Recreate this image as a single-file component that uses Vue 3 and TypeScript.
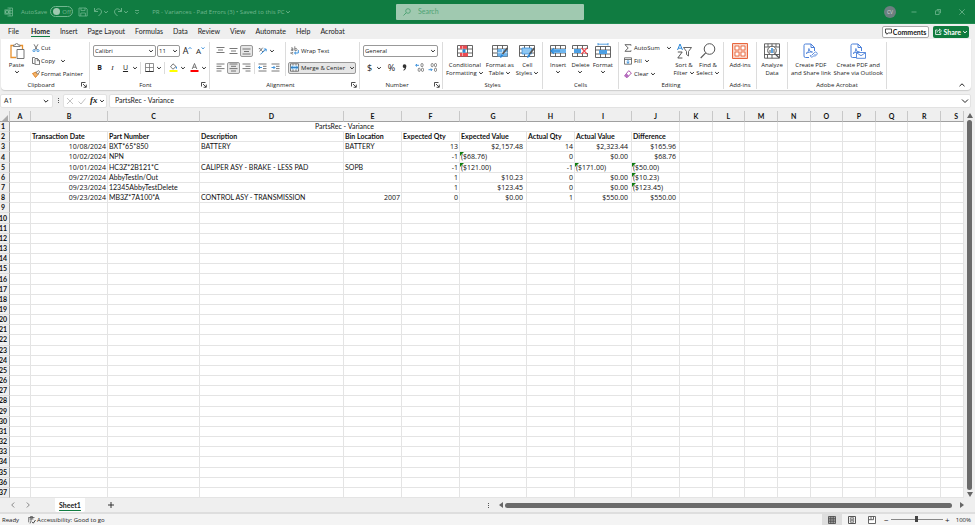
<script setup lang="ts">
import { ref } from 'vue'

interface Cell {
  text: string
  kind?: 'num' | 'money' | 'flag'
}

const tabs: string[] = ['File', 'Home', 'Insert', 'Page Layout', 'Formulas', 'Data', 'Review', 'View', 'Automate', 'Help', 'Acrobat']
const activeTab = ref('Home')

const columns: string[] = 'ABCDEFGHIJKLMNOPQRS'.split('')
const headings: string[] = ['', 'Transaction Date', 'Part Number', 'Description', 'Bin Location', 'Expected Qty', 'Expected Value', 'Actual Qty', 'Actual Value', 'Difference']

const t = (text: string): Cell => ({ text })
const n = (text: string): Cell => ({ text, kind: 'num' })
const m = (text: string): Cell => ({ text, kind: 'money' })
const f = (text: string): Cell => ({ text, kind: 'flag' })

const records: Cell[][] = [
  [t(''), n('10/08/2024'), t('BXT*65*850'), t('BATTERY'), t('BATTERY'), n('13'), m('$2,157.48'), n('14'), m('$2,323.44'), m('$165.96')],
  [t(''), n('10/02/2024'), t('NPN'), t(''), t(''), n('-1'), f('($68.76)'), n('0'), m('$0.00'), m('$68.76')],
  [t(''), n('10/01/2024'), t('HC3Z*2B121*C'), t('CALIPER ASY - BRAKE - LESS PAD'), t('SOPB'), n('-1'), f('($121.00)'), n('-1'), f('($171.00)'), f('($50.00)')],
  [t(''), n('09/27/2024'), t('AbbyTestIn/Out'), t(''), t(''), n('1'), m('$10.23'), n('0'), m('$0.00'), f('($10.23)')],
  [t(''), n('09/23/2024'), t('12345AbbyTestDelete'), t(''), t(''), n('1'), m('$123.45'), n('0'), m('$0.00'), f('($123.45)')],
  [t(''), n('09/23/2024'), t('MB3Z*7A100*A'), t('CONTROL ASY - TRANSMISSION'), n('2007'), n('0'), m('$0.00'), n('1'), m('$550.00'), m('$550.00')],
]
const emptyRows: number[] = Array.from({ length: 29 }, (_, i) => i + 9)

const fontName = ref('Calibri')
const fontSize = ref('11')
const numberFormat = ref('General')
const formula = ref('PartsRec - Variance')
const query = ref('')
const zoom = ref(50)
</script>

<template>
  <svg class="defs" aria-hidden="true">
    <symbol id="chev" viewBox="0 0 6 6"><path d="M1.2 2.1 3 3.9 4.8 2.1" fill="none" stroke="currentColor" stroke-width="1" /></symbol>
    <symbol id="launch" viewBox="0 0 6 6"><path d="M.5 4.500V.5h4M2 2l3 3M5.300 2.600v2.700H2.600" fill="none" stroke="currentColor" stroke-width=".8" /></symbol>
    <symbol id="grid" viewBox="0 0 16 14">
      <path d="M.5 1.500h15v11H.5zM.5 5h15M.5 9h15M5.500 1.500v11M10.500 1.500v11" fill="#fff" stroke="#555" stroke-width=".9" />
    </symbol>
    <symbol id="pdf" viewBox="0 0 14 16">
      <path d="M6 14.500H2.500A1.500 1.500 0 0 1 1 13V2.500A1.500 1.500 0 0 1 2.500 1H8l3.500 3.500V8M8 1v3.500h3.500" fill="none" stroke="#4a7fd8" stroke-width="1" />
      <path d="M3 10.500C5 9.500 6 7.500 5.900 5.500 6.200 8 7.500 9 9.500 9 7 8.800 5 9.300 3 10.500z" fill="none" stroke="#4a7fd8" stroke-width=".9" />
    </symbol>
  </svg>

  <div class="app">
    <header class="title-bar">
      <div class="quick">
        <svg class="i10 logo" viewBox="0 0 10 10"><path d="M3.500 1h5v8h-5M6 1v8M3.500 3.700h5M3.500 6.300h5" fill="none" stroke="currentColor" stroke-width=".8" /><path d="M.5 2.500h5v5h-5z" fill="currentColor" /><path d="m1.800 3.500 2.400 3m0-3-2.400 3" stroke="#107c41" stroke-width=".8" /></svg>
        <span class="autosave">AutoSave</span>
        <button class="toggle" aria-label="AutoSave"><i></i>Off</button>
        <button class="tb save" aria-label="Save"><svg class="i10" viewBox="0 0 10 10"><path d="M1 1h7l1.200 1.200V9H1zM3 1v2.600h4V1M2.800 9V6h4.600v3" fill="none" stroke="currentColor" stroke-width=".8" /></svg></button>
        <button class="tb" aria-label="Undo"><svg class="i10" viewBox="0 0 10 10"><path d="M1.500 1v3.500H5M1.700 4.300C4 1.500 6 1.400 7.500 2.600 9 4 8.600 5.800 7.500 7L5.500 9" fill="none" stroke="currentColor" stroke-width=".9" /></svg></button>
        <svg class="chev"><use href="#chev" /></svg>
        <button class="tb redo" aria-label="Redo"><svg class="i10" viewBox="0 0 10 10"><path d="M8.500 1v3.500H5M8.300 4.300C6 1.500 4 1.400 2.500 2.600 1 4 1.400 5.800 2.500 7l2 2" fill="none" stroke="currentColor" stroke-width=".9" /></svg></button>
        <svg class="chev"><use href="#chev" /></svg>
        <svg class="chev custom" viewBox="0 0 6 6"><path d="M1 1.500h4M1.300 3.200 3 4.900l1.700-1.700" fill="none" stroke="currentColor" stroke-width=".8" /></svg>
        <span class="doc">PR - Variances - Pad Errors (3) • Saved to this PC</span>
        <svg class="chev"><use href="#chev" /></svg>
      </div>
      <label class="search">
        <svg class="i8" viewBox="0 0 8 8"><circle cx="5" cy="3" r="2.300" fill="none" stroke="currentColor" stroke-width=".9" /><path d="M3.300 4.700.5 7.500" stroke="currentColor" /></svg>
        <input v-model="query" type="search" placeholder="Search" aria-label="Search" />
      </label>
      <div class="window">
        <button class="avatar" aria-label="Account">CV</button>
        <button class="tb" aria-label="Minimize"><svg class="i8" viewBox="0 0 8 8"><path d="M1.500 4h5" stroke="currentColor" stroke-width=".8" /></svg></button>
        <button class="tb" aria-label="Restore"><svg class="i8" viewBox="0 0 8 8"><path d="M1.500 2.800h3.700v3.700H1.500zM2.800 1.500h3.700v3.700" fill="none" stroke="currentColor" stroke-width=".8" /></svg></button>
        <button class="tb" aria-label="Close"><svg class="i8" viewBox="0 0 8 8"><path d="m1.300 1.300 5.400 5.400m0-5.400L1.300 6.700" stroke="currentColor" stroke-width=".8" /></svg></button>
      </div>
    </header>

    <nav class="tabs">
      <button v-for="tab in tabs" :key="tab" class="tab" :class="{ active: tab === activeTab }" @click="activeTab = tab">{{ tab }}</button>
      <span class="grow"></span>
      <button class="comments"><svg class="i7" viewBox="0 0 7 7"><path d="M.5 1h6v4H3.200L1.800 6.300V5H.5z" fill="none" stroke="currentColor" stroke-width=".8" /></svg>Comments</button>
      <button class="share"><svg class="i7" viewBox="0 0 7 7"><path d="M2.500 2H.6v4.500h5.200V4.800M2 4.500C2.200 3 3.200 2.400 4.500 2.400V1l2 1.900-2 1.900V3.500" fill="none" stroke="currentColor" stroke-width=".8" /></svg>Share<svg class="chev"><use href="#chev" /></svg></button>
    </nav>

    <section class="ribbon">
      <div class="group clipboard">
        <div class="body">
          <button class="big">
            <svg class="pic" viewBox="0 0 16 16"><path d="M4.500 2.500H2v12h5M11 2.500h2.500V6" fill="none" stroke="#e8912d" stroke-width="1.300" /><path d="M4.500 3.500V2h1.700a1.500 1.500 0 0 1 3 0H11v1.500z" fill="#fff" stroke="#666" stroke-width=".8" /><path d="M8 6.500h7v9H8z" fill="#fff" stroke="#666" stroke-width=".9" /></svg>
            <span>Paste</span><svg class="chev"><use href="#chev" /></svg>
          </button>
          <div class="stack">
            <button><svg class="i8" viewBox="0 0 8 8"><path d="M2 .3 5.300 6M6 .3 2.700 6" stroke="#555" stroke-width=".8" /><circle cx="2" cy="6.700" r="1.100" fill="none" stroke="#2b88d8" stroke-width=".8" /><circle cx="6" cy="6.700" r="1.100" fill="none" stroke="#2b88d8" stroke-width=".8" /></svg>Cut</button>
            <button><svg class="i8" viewBox="0 0 8 8"><path d="M2.500 6.500H.5v-6h2.300M3 1.500h2.500l2 2v4.200H3zM5.300 1.500v2.200h2.200" fill="none" stroke="#555" stroke-width=".8" /></svg>Copy<svg class="chev gap"><use href="#chev" /></svg></button>
            <button><svg class="i8" viewBox="0 0 8 8"><path d="M.5 3.500 4 2l2 2.500-2.500 3z" fill="#f2b36b" stroke="#d9730d" stroke-width=".8" /><path d="M4 2.300 6 4.400 7.600 1.700 6.700.6z" fill="#fff" stroke="#555" stroke-width=".7" /></svg>Format Painter</button>
          </div>
        </div>
        <div class="name"><span>Clipboard</span><svg class="launch"><use href="#launch" /></svg></div>
      </div>

      <div class="group font">
        <div class="body lines">
          <div class="line">
            <span class="combo wide"><select v-model="fontName" aria-label="Font"><option>Calibri</option></select><svg class="chev"><use href="#chev" /></svg></span>
            <span class="combo size"><select v-model="fontSize" aria-label="Font size"><option>11</option></select><svg class="chev"><use href="#chev" /></svg></span>
            <button class="ib grow-font" aria-label="Increase font size">A<svg class="tick" viewBox="0 0 4 4"><path d="m.5 3 1.500-1.700L3.500 3" fill="none" stroke="#2b88d8" stroke-width=".8" /></svg></button>
            <button class="ib shrink-font" aria-label="Decrease font size">A<svg class="tick" viewBox="0 0 4 4"><path d="M.5 1.300 2 3l1.500-1.700" fill="none" stroke="#2b88d8" stroke-width=".8" /></svg></button>
          </div>
          <div class="line">
            <button class="ib"><b>B</b></button><button class="ib"><em>I</em></button><button class="ib"><u>U</u></button><svg class="chev"><use href="#chev" /></svg>
            <i class="bar"></i>
            <button class="ib" aria-label="Borders"><svg class="i9" viewBox="0 0 9 9"><path d="M.5.5h8v8h-8zM4.500.5v8M.5 4.500h8" fill="none" stroke="#777" stroke-width=".8" /><path d="M.5 8.500h8" stroke="#333" /></svg></button><svg class="chev"><use href="#chev" /></svg>
            <i class="bar"></i>
            <button class="ib" aria-label="Fill color"><svg class="i9" viewBox="0 0 9 9"><path d="m4 .8 3 2.700-3 2.700-2.500-2.400z" fill="#fff" stroke="#555" stroke-width=".8" /><path d="M7.200 3q1.300 1.800.6 2.700-.8.300-1-.7z" fill="#2b88d8" /><path d="M.5 7h8v2h-8z" fill="#ff0" /></svg></button><svg class="chev"><use href="#chev" /></svg>
            <button class="ib font-color" aria-label="Font color"><svg class="i9" viewBox="0 0 9 9"><path d="M2.200 6 4.500.5 6.800 6M3 4.200h3" fill="none" stroke="#555" stroke-width=".8" /><path d="M.5 7h8v2h-8z" fill="red" /></svg></button><svg class="chev"><use href="#chev" /></svg>
          </div>
        </div>
        <div class="name"><span>Font</span><svg class="launch"><use href="#launch" /></svg></div>
      </div>

      <div class="group alignment">
        <div class="body split">
          <div class="lines">
            <div class="line">
              <button class="ib" aria-label="Top align"><svg class="i9" viewBox="0 0 9 9"><path d="M.5 1.500h8M2 4h5M.5 6.500h8" stroke="#555" stroke-width=".8" /></svg></button>
              <button class="ib" aria-label="Middle align"><svg class="i9" viewBox="0 0 9 9"><path d="M.5 2.500h8M2 5h5M.5 7.500h8" stroke="#555" stroke-width=".8" /></svg></button>
              <button class="ib on" aria-label="Bottom align"><svg class="i9" viewBox="0 0 9 9"><path d="M.5 3h8M2 5.500h5M.5 8h8" stroke="#555" stroke-width=".8" /></svg></button>
              <button class="ib orient" aria-label="Orientation"><svg class="i9" viewBox="0 0 9 9"><path d="M.8 2.800q1.500-1 2 .5l.8 1.400M1.500 5.500l3.200-3.800M4 5.500q1.800.5 1.800-1" fill="none" stroke="#555" stroke-width=".8" /><path d="M2.500 8.300 8 3.300M5.800 3H8.200v2.300" fill="none" stroke="#2b88d8" stroke-width=".9" /></svg></button><svg class="chev"><use href="#chev" /></svg>
            </div>
            <div class="line">
              <button class="ib" aria-label="Align left"><svg class="i9" viewBox="0 0 9 9"><path d="M.5 1h8M.5 3.300h5M.5 5.600h8M.5 8h5" stroke="#555" stroke-width=".8" /></svg></button>
              <button class="ib on" aria-label="Center"><svg class="i9" viewBox="0 0 9 9"><path d="M.5 1h8M2 3.300h5M.5 5.600h8M2 8h5" stroke="#555" stroke-width=".8" /></svg></button>
              <button class="ib" aria-label="Align right"><svg class="i9" viewBox="0 0 9 9"><path d="M.5 1h8M3.500 3.300h5M.5 5.600h8M3.500 8h5" stroke="#555" stroke-width=".8" /></svg></button>
              <i class="bar"></i>
              <button class="ib" aria-label="Decrease indent"><svg class="i9" viewBox="0 0 9 9"><path d="M.5 1h8M5 3.300h3.500M5 5.600h3.500M.5 8h8" stroke="#555" stroke-width=".8" /><path d="M4 4.500H.7M2 3 .6 4.500 2 6" fill="none" stroke="#2b88d8" stroke-width=".9" /></svg></button>
              <button class="ib" aria-label="Increase indent"><svg class="i9" viewBox="0 0 9 9"><path d="M.5 1h8M5 3.300h3.500M5 5.600h3.500M.5 8h8" stroke="#555" stroke-width=".8" /><path d="M.5 4.500h3.300M2.500 3l1.400 1.500L2.500 6" fill="none" stroke="#2b88d8" stroke-width=".9" /></svg></button>
            </div>
          </div>
          <div class="lines wrap-col">
            <div class="line"><button class="wrap"><svg class="i9" viewBox="0 0 9 9"><path d="M1 2q2-.8 2 1v1.500M3 3.200q-2 0-2 .9 0 .9 2 .2M4.800.3v4.200M4.800 2.800q2.200-1 2.200.7T4.800 4.300M1 6.200v1.600M3.200 6.300q-1.700 0-1.700.9t1.700.9" fill="none" stroke="#555" stroke-width=".7" /><path d="M8.300 4v3H4.500M6 5.600 4.500 7 6 8.400" fill="none" stroke="#2b88d8" stroke-width=".9" /></svg>Wrap Text</button></div>
            <div class="line"><button class="merge"><svg class="i9" viewBox="0 0 9 9"><path d="M.5.8h8v7.400h-8z" fill="#fff" stroke="#555" stroke-width=".8" /><path d="M.8 2.700h7.400v3.600H.8z" fill="#9fd0f5" /><path d="M3 .8v1.700M6 .8v1.700M3 6.300v2M6 6.300v2" stroke="#555" stroke-width=".7" /><path d="M1.300 4.500h6.400M2.500 3.400 1.300 4.500l1.200 1.100M6.500 3.400l1.200 1.100-1.200 1.100" fill="none" stroke="#1b6fb8" stroke-width=".8" /></svg><span>Merge &amp; Center</span><svg class="chev"><use href="#chev" /></svg></button></div>
          </div>
        </div>
        <div class="name"><span>Alignment</span><svg class="launch"><use href="#launch" /></svg></div>
      </div>

      <div class="group number">
        <div class="body lines">
          <div class="line"><span class="combo full"><select v-model="numberFormat" aria-label="Number format"><option>General</option></select><svg class="chev"><use href="#chev" /></svg></span></div>
          <div class="line">
            <button class="ib sym">$</button><svg class="chev"><use href="#chev" /></svg>
            <button class="ib sym pct">%</button><button class="ib" aria-label="Comma style"><svg class="i7" viewBox="0 0 7 7"><path d="M3.500.3a1.900 1.900 0 0 1 1.900 2q0 3-2.600 4.400l-.5-.7Q3.700 5 3.700 4.100 1.700 4 1.700 2.200A1.800 1.800 0 0 1 3.500.3z" fill="#333" /></svg></button>
            <button class="ib dec" aria-label="Increase decimal"><svg class="i9" viewBox="0 0 9 9"><path d="M4 2.300H.7M2 1 .7 2.300 2 3.600" fill="none" stroke="#2b88d8" stroke-width=".9" /><rect x="6" y=".5" width="2" height="3.200" rx="1" fill="none" stroke="#555" stroke-width=".7" /><rect x="3.200" y="5.200" width="2" height="3.200" rx="1" fill="none" stroke="#555" stroke-width=".7" /><rect x="6.500" y="5.200" width="2" height="3.200" rx="1" fill="none" stroke="#555" stroke-width=".7" /></svg></button>
            <button class="ib" aria-label="Decrease decimal"><svg class="i9" viewBox="0 0 9 9"><path d="M.5 6.700h3.600M2.800 5.400l1.300 1.300L2.800 8" fill="none" stroke="#2b88d8" stroke-width=".9" /><rect x="3.200" y=".5" width="2" height="3.200" rx="1" fill="none" stroke="#555" stroke-width=".7" /><rect x="6.500" y=".5" width="2" height="3.200" rx="1" fill="none" stroke="#555" stroke-width=".7" /><rect x="6.500" y="5.200" width="2" height="3.200" rx="1" fill="none" stroke="#555" stroke-width=".7" /></svg></button>
          </div>
        </div>
        <div class="name"><span>Number</span><svg class="launch"><use href="#launch" /></svg></div>
      </div>

      <div class="group styles">
        <div class="body">
          <button class="big"><svg class="pic" viewBox="0 0 16 16"><use href="#grid" y="1" height="14" /><path d="M3 2.500h7v3.300H3zM3 10h8v3.500H3z" fill="#ee4b52" /><path d="M5.500 6.200h3v3.500h-3z" fill="#2b88d8" /><path d="M5.500 3v10" stroke="#fff" stroke-width=".5" /></svg><span>Conditional<br />Formatting<svg class="chev"><use href="#chev" /></svg></span></button>
          <button class="big"><svg class="pic" viewBox="0 0 16 16"><use href="#grid" y="1" height="14" /><path d="M5.500 6h10v7.500h-10z" fill="#6db5ee" /><path d="M5.500 9.700h10M10.500 6v7.500" stroke="#fff" stroke-width=".6" /><path d="m15.500 5-5 6" stroke="#555" stroke-width="1.800" /><path d="M8 15q.3-3 2-4l1.300 1.200Q10.500 15 8 15z" fill="#2b88d8" /></svg><span>Format as<br />Table<svg class="chev"><use href="#chev" /></svg></span></button>
          <button class="big"><svg class="pic" viewBox="0 0 16 16"><use href="#grid" y="1" height="14" /><path d="M3 5h9.500v6H3z" fill="#8fc7f2" stroke="#2b88d8" stroke-width=".7" /><path d="m15.500 5-5 6" stroke="#555" stroke-width="1.800" /><path d="M8 15q.3-3 2-4l1.300 1.200Q10.500 15 8 15z" fill="#2b88d8" /></svg><span>Cell<br />Styles<svg class="chev"><use href="#chev" /></svg></span></button>
        </div>
        <div class="name"><span>Styles</span></div>
      </div>

      <div class="group cells">
        <div class="body">
          <button class="big"><svg class="pic" viewBox="0 0 16 16"><use href="#grid" y="1" height="14" /><path d="M3 6h13v4H3z" fill="#6db5ee" /><path d="M10 8H1M4 5.200 1 8l3 2.800" fill="none" stroke="#2b88d8" stroke-width="1.200" /></svg><span>Insert</span><svg class="chev"><use href="#chev" /></svg></button>
          <button class="big"><svg class="pic" viewBox="0 0 16 16"><use href="#grid" y="1" height="14" /><path d="M0 6h16v4H0z" fill="#fff" /><path d="M2 6h7v4H2z" fill="#4c9fe3" /><path d="m9.500 5 5.500 6m0-6-5.500 6" stroke="#ee4b52" stroke-width="1.200" /></svg><span>Delete</span><svg class="chev"><use href="#chev" /></svg></button>
          <button class="big"><svg class="pic" viewBox="0 0 16 16"><use href="#grid" y="2" height="14" /><path d="M4 7h8v4H4z" fill="#4c9fe3" /><path d="M3 1.200h10M3 0v2.400M13 0v2.400" stroke="#2b88d8" stroke-width=".8" /></svg><span>Format</span><svg class="chev"><use href="#chev" /></svg></button>
        </div>
        <div class="name"><span>Cells</span></div>
      </div>

      <div class="group editing">
        <div class="body">
          <div class="stack">
            <button class="sum"><svg class="i8" viewBox="0 0 8 8"><path d="M7 1.600V.7H1L4.200 4 1 7.300h6v-.9" fill="none" stroke="#555" stroke-width=".9" /></svg><span>AutoSum</span><svg class="chev gap"><use href="#chev" /></svg></button>
            <button><svg class="i8" viewBox="0 0 8 8"><path d="M.5.8h7v6.400h-7zM.5 2.500h7" fill="none" stroke="#555" stroke-width=".8" /><path d="M4 3v3.300M2.600 5 4 6.300 5.400 5" fill="none" stroke="#2b88d8" stroke-width=".9" /></svg>Fill<svg class="chev"><use href="#chev" /></svg></button>
            <button><svg class="i8" viewBox="0 0 8 8"><path d="M4.700.7 7.400 3 3.500 7.300H2L.6 5.800z" fill="#fff" stroke="#a349a4" stroke-width=".9" /><path d="M2.500 3.500 5 5.700 3.500 7.300H2L.6 5.800z" fill="#b56cc0" /></svg>Clear<svg class="chev"><use href="#chev" /></svg></button>
          </div>
          <button class="big"><svg class="pic" viewBox="0 0 16 16"><path d="M1.500 7 4 1l2.500 6M2.300 5.200h3.400" fill="none" stroke="#2b88d8" /><path d="M1.800 9h4.400l-4.400 6h4.600" fill="none" stroke="#555" /><path d="M7.500 4.500h8l-3 4v4.500l-2-1.500v-3z" fill="none" stroke="#555" stroke-width=".9" /></svg><span>Sort &amp;<br />Filter<svg class="chev"><use href="#chev" /></svg></span></button>
          <button class="big"><svg class="pic" viewBox="0 0 16 16"><circle cx="9.500" cy="6" r="5.300" fill="none" stroke="#555" /><path d="M5.700 9.800.7 15" stroke="#555" stroke-width="1.100" /></svg><span>Find &amp;<br />Select<svg class="chev"><use href="#chev" /></svg></span></button>
        </div>
        <div class="name"><span>Editing</span></div>
      </div>

      <div class="group addins">
        <div class="body"><button class="big"><svg class="pic" viewBox="0 0 16 16"><path d="M.5.5h15v15H.5z" fill="#f9d3c6" stroke="#e8663d" /><path d="M3 3h4v4H3zM9 3h4v4H9zM3 9h4v4H3zM9 9h4v4H9z" fill="#fff" stroke="#e8663d" stroke-width=".9" /></svg><span>Add-ins</span></button></div>
        <div class="name"><span>Add-ins</span></div>
      </div>

      <div class="group analyze">
        <div class="body"><button class="big"><svg class="pic" viewBox="0 0 16 16"><path d="M.5.8h15v14.400H.5zM.5 4h15M.5 11.500h15M4 .8V4M8 .8V4M12 .8V4M3.500 11.500v3.700M8 11.500v3.700" fill="none" stroke="#555" stroke-width=".9" /><circle cx="8" cy="7.500" r="4.300" fill="#fff" stroke="#555" /><path d="M6 7v3M10 6v4" stroke="#555" /><path d="M8 5v5" stroke="#2b88d8" stroke-width="1.500" /><path d="m11 10.700 4 4" stroke="#555" stroke-width="1.300" /></svg><span>Analyze<br />Data</span></button></div>
        <div class="name"></div>
      </div>

      <div class="group acrobat">
        <div class="body">
          <button class="big"><svg class="pic" viewBox="0 0 16 16"><use href="#pdf" width="14" height="16" /><path d="m8.500 12.500 3-3a1.500 1.500 0 0 1 2.200 2.200l-2 2M12.500 11l-3 3a1.500 1.500 0 0 1-2-2" fill="none" stroke="#4a7fd8" stroke-width=".9" /></svg><span>Create PDF<br />and Share link</span></button>
          <button class="big"><svg class="pic" viewBox="0 0 16 16"><use href="#pdf" width="14" height="16" /><path d="M6.500 9.500h9v5.800h-9zM6.500 9.700l4.500 3 4.500-3" fill="#fff" stroke="#4a7fd8" stroke-width=".9" /></svg><span>Create PDF and<br />Share via Outlook</span></button>
        </div>
        <div class="name"><span>Adobe Acrobat</span></div>
      </div>
      <button class="collapse" aria-label="Collapse ribbon"><svg class="i8" viewBox="0 0 8 8"><path d="m1.500 5.200 2.500-2.400 2.500 2.400" fill="none" stroke="currentColor" /></svg></button>
    </section>

    <section class="formula-bar">
      <button class="box name-box">A1<svg class="i8" viewBox="0 0 8 8"><path d="M1.800 3 4 5.200 6.200 3" fill="none" stroke="currentColor" /></svg></button>
      <span class="dots"><i></i><i></i><i></i></span>
      <div class="box fx-box">
        <button aria-label="Cancel"><svg class="i8" viewBox="0 0 8 8"><path d="m1 1 6 6m0-6L1 7" stroke="#bbb" stroke-width=".9" /></svg></button>
        <button aria-label="Enter"><svg class="i8" viewBox="0 0 8 8"><path d="M.5 4.500 3 7l4.500-5.500" fill="none" stroke="#bbb" stroke-width=".9" /></svg></button>
        <button class="fx">fx</button>
        <svg class="chev"><use href="#chev" /></svg>
      </div>
      <label class="box entry"><input v-model="formula" aria-label="Formula" /><svg class="i8" viewBox="0 0 8 8"><path d="M1 2.500 4 5.500l3-3" fill="none" stroke="currentColor" /></svg></label>
    </section>

    <main class="sheet">
      <table>
        <thead>
          <tr><th class="corner"><i></i></th><th v-for="c in columns" :key="c" :class="{ cut: c === 'S' }">{{ c }}</th></tr>
        </thead>
        <tbody>
          <tr><th>1</th><td colspan="10" class="merged">PartsRec - Variance</td><td v-for="k in 9" :key="k"></td></tr>
          <tr><th>2</th><td v-for="(h, i) in headings" :key="i" class="head">{{ h }}</td><td v-for="k in 9" :key="'b' + k"></td></tr>
          <tr v-for="(row, r) in records" :key="r"><th>{{ r + 3 }}</th><td v-for="(cell, i) in row" :key="i" :class="cell.kind">{{ cell.text }}</td><td v-for="k in 9" :key="'b' + k"></td></tr>
          <tr v-for="r in emptyRows" :key="r"><th>{{ r }}</th><td v-for="k in 19" :key="k"></td></tr>
        </tbody>
      </table>
      <div class="vscroll"><i class="arrow up"></i><i class="thumb"></i><i class="arrow down"></i></div>
    </main>

    <div class="sheet-bar">
      <button class="nav" aria-label="Previous sheet"><svg class="i8" viewBox="0 0 8 8"><path d="M5.200 1.500 2.700 4l2.500 2.500" fill="none" stroke="currentColor" /></svg></button>
      <button class="nav" aria-label="Next sheet"><svg class="i8" viewBox="0 0 8 8"><path d="M2.800 1.500 5.300 4 2.800 6.500" fill="none" stroke="currentColor" /></svg></button>
      <button class="sheet-tab"><span>Sheet1</span></button>
      <button class="add" aria-label="New sheet"><svg class="i8" viewBox="0 0 8 8"><path d="M4 1v6M1 4h6" stroke="currentColor" stroke-width=".9" /></svg></button>
      <div class="hscroll"><span class="dots"><i></i><i></i><i></i></span><i class="arrow left"></i><i class="thumb"></i><i class="arrow right"></i></div>
    </div>

    <footer class="status">
      <span class="ready">Ready</span>
      <svg class="i8" viewBox="0 0 8 8"><path d="M.5 1.500h6M2.500.5h2v1.700h-2zM1.500 3h4M3 3v2L2 7.500M.7 1.500v4.800" fill="none" stroke="#555" stroke-width=".8" /><path d="m4 5.800 1.300 1.400L7.500 4" fill="none" stroke="#444" /></svg>
      <span>Accessibility: Good to go</span>
      <span class="grow"></span>
      <button class="view on" aria-label="Normal view"><svg class="i8" viewBox="0 0 8 8"><path d="M.5.500h7v7h-7zM.5 2.800h7M.5 5.200h7M2.800.5v7M5.200.5v7" fill="#aaa" stroke="#444" stroke-width=".8" /></svg></button>
      <button class="view" aria-label="Page layout view"><svg class="i8" viewBox="0 0 8 8"><path d="M.5.500h7v7h-7z" fill="#fff" stroke="#555" /><path d="M2.300 1.800h3.400v4.400H2.300zM3 3.300h2M3 4.700h2" fill="none" stroke="#555" stroke-width=".8" /></svg></button>
      <button class="view" aria-label="Page break view"><svg class="i8" viewBox="0 0 8 8"><path d="M.5.500h7v7h-7zM3 .5v3.200H.5M3 3.700h2.500V.5" fill="#fff" stroke="#555" stroke-width=".9" /></svg></button>
      <button class="zoom-btn">−</button>
      <input v-model="zoom" class="zoom" type="range" min="0" max="100" aria-label="Zoom" />
      <button class="zoom-btn">+</button>
      <span class="percent">100%</span>
    </footer>
  </div>
</template>

<style>
html,
body,
#app {
  height: 100%;
  margin: 0;
}
</style>

<style scoped>
* { box-sizing: border-box; }
.app {
  --cols: 10px 21px 77px 92px 144px 58px 58px 67px 48px 57px 48px repeat(8, minmax(0, 1fr)) 23px;
  display: flex;
  flex-direction: column;
  height: 100%;
  overflow: hidden;
  background: #efefef;
  color: #222;
  font: 6px/8px "Open Sans", "Noto Sans", sans-serif;
  white-space: nowrap;
}
.defs { position: absolute; width: 0; height: 0; }
button, input, select { margin: 0; padding: 0; border: 0; background: none; color: inherit; font: inherit; white-space: nowrap; outline: 0; }
svg { display: block; flex: none; }
.grow { flex: 1; }
.chev { width: 6px; height: 6px; }
.i7 { width: 7px; height: 7px; }
.i8 { width: 8px; height: 8px; }
.i9 { width: 9px; height: 9px; }
.i10 { width: 10px; height: 10px; }

.title-bar {
  display: grid;
  grid-template-columns: 396px minmax(100px, 188px) 1fr;
  align-items: center;
  flex: none;
  height: 24px;
  background: #107c41;
  border-bottom: 1px solid #1f8a4f;
  color: #70b78f;
}
.quick, .window { display: flex; align-items: center; }
.quick { padding-left: 4px; }
.autosave { margin: 0 3px 0 7px; }
.toggle { display: flex; align-items: center; gap: 2px; width: 23px; height: 11px; padding-left: 2px; border: 1px solid #70b78f; border-radius: 6px; }
.toggle i { width: 7px; height: 7px; border-radius: 50%; background: #a0c9b0; }
.save { margin: 0 5px 0 5px; }
.redo { margin-left: 4px; }
.custom { margin: 0 12px 0 5px; }
.search { display: flex; align-items: center; gap: 7px; height: 16px; padding-left: 7px; border-radius: 1px; background: #a0c9b0; color: #4fa374; }
.search input { flex: 1; min-width: 0; appearance: none; font: 7px/9px Lato, sans-serif; }
.search input::placeholder { color: #4fa374; opacity: 1; }
.window { justify-content: flex-end; gap: 16px; padding-right: 9px; }
.avatar { width: 12px; height: 12px; margin-right: -2px; border-radius: 50%; background: #6d7f80; color: #d5dcdc; font-size: 5px; }

.tabs { display: flex; align-items: center; flex: none; height: 15px; padding: 0 6px 0 8px; }
.tab { height: 15px; margin-right: 10px; padding: 0; font: 7px/15px Lato, "Open Sans", sans-serif; }
.tab:first-child { margin-right: 12px; }
.tab.active { font-weight: 700; box-shadow: inset 0 -2px #efefef, inset 0 -3px #107c41; }
.comments, .share { display: flex; align-items: center; gap: 2px; height: 12px; padding: 0 3px; border-radius: 2px; font: 700 7px/10px Lato, "Open Sans", sans-serif; }
.comments { gap: 1px; margin-right: 4px; padding: 0 2px; border: 1px solid #aaa; background: #fff; }
.share { gap: 1px; padding: 0 1px 0 2px; background: #0f7b3e; color: #fff; }

.ribbon { display: flex; flex: none; height: 51px; margin: 0 4px 0 1px; border-radius: 0 0 4px 4px; background: #fff; box-shadow: 0 1px 1px #ccc; }
.group { display: flex; flex-direction: column; flex: none; margin: 3px 0 1px; border-right: 1px solid #dcdcdc; }
.body { display: flex; flex: 1; min-height: 0; }
.name { display: flex; align-items: center; height: 9px; }
.name span { flex: 1; text-align: center; }
.launch { width: 6px; height: 6px; margin-right: 2px; }
.clipboard { width: 89px; }
.font { width: 120px; }
.alignment { width: 150px; }
.number { width: 83px; }
.styles { width: 100px; }
.cells { width: 76px; }
.editing { width: 105px; }
.addins { width: 33px; }
.analyze { width: 31px; }
.acrobat { width: 99px; }

.big { display: flex; flex-direction: column; align-items: center; flex: 0 1 auto; height: 36px; }
.big .pic { width: 16px; height: 16px; margin: 1px 0 2px; }
.big span .chev { display: inline-block; margin-left: 1px; vertical-align: -1px; }
.clipboard .big { width: 31px; }
.styles .body { padding: 0 3px; justify-content: space-between; }
.cells .body { padding: 0 4px; }
.cells .big { flex: 1; }
.editing .body { padding-left: 5px; }
.editing .big { width: 24px; }
.addins .big, .analyze .big { flex: 1; }
.acrobat .body { padding: 0 3px; justify-content: space-between; }
.stack { display: flex; flex-direction: column; }
.stack button { display: flex; align-items: center; gap: 1px; height: 13px; }
.editing .stack { width: 48px; }
.editing .stack button { gap: 2px; }
.sum span { flex: 1; text-align: left; }
.chev.gap { margin-left: 4px; }

.lines { display: flex; flex-direction: column; padding-left: 3px; }
.line { display: flex; align-items: center; height: 17px; }
.combo { display: flex; align-items: center; height: 12px; margin-right: 1px; border: 1px solid #999; border-radius: 2px; }
.combo select { flex: 1; min-width: 0; padding-left: 1px; appearance: none; }
.combo .chev { margin-right: 1px; }
.wide { width: 63px; }
.size { width: 23px; }
.full { flex: 1; margin-right: 4px; }
.ib { display: flex; align-items: center; justify-content: center; width: 13px; height: 12px; font-size: 7px; }
.ib.on { border: 1px solid #999; border-radius: 2px; background: #e6e6e6; }
.ib b { font-weight: 700; }
.ib em { font-family: "Liberation Serif", serif; }
.grow-font { font-size: 9px; }
.shrink-font { font-size: 8px; }
.tick { width: 4px; height: 4px; margin-bottom: 5px; }
.bar { width: 1px; height: 12px; margin: 0 2px; background: #dcdcdc; }
.font-color { margin-left: 2px; }
.orient { margin-left: 3px; }
.split .lines:first-child { width: 75px; }
.alignment .lines { padding-left: 4px; }
.alignment .bar { margin: 0 1px; }
.alignment .wrap-col { flex: 1; padding: 0 3px 0 2px; border-left: 1px solid #dcdcdc; height: 34px; }
.wrap, .merge { display: flex; align-items: center; gap: 2px; padding-left: 2px; }
.merge { flex: 1; height: 12px; padding-left: 1px; border: 1px solid #999; border-radius: 2px; background: #e6e6e6; }
.merge span { flex: 1; text-align: left; }
.sym { font-size: 9px; }
.pct { margin-left: 3px; }
.dec { margin-left: 2px; }
.collapse { margin: auto 5px 1px auto; }

.formula-bar { display: flex; align-items: center; flex: none; height: 21px; padding-right: 4px; }
.box { display: flex; align-items: center; height: 14px; border: 1px solid #e2e2e2; border-radius: 2px; background: #fff; }
.name-box { justify-content: space-between; width: 53px; padding: 0 2px 0 3px; font-size: 7px; }
.dots { display: flex; flex-direction: column; gap: 1px; width: 10px; align-items: center; }
.dots i { width: 1px; height: 1px; background: #555; }
.fx-box { gap: 4px; width: 44px; padding-left: 2px; }
.fx-box .chev { margin-left: -3px; }
.fx { font: italic 700 9px/9px "Liberation Serif", serif; }
.entry { flex: 1; margin-left: 2px; padding: 0 1px 0 5px; }
.entry input { flex: 1; min-width: 0; font: 7px/9px Lato, "Open Sans", sans-serif; }

.sheet { display: flex; flex: 1; min-height: 0; }
table { display: flex; flex-direction: column; flex: 1; min-width: 0; background: #fff; }
thead { display: block; flex: none; }
tbody { display: grid; grid-auto-rows: minmax(0, 1fr); flex: 1; min-height: 0; }
tr { display: grid; grid-template-columns: var(--cols); min-height: 0; }
th, td { min-width: 0; padding: 0 1px; border-right: 1px solid #e4e4e4; border-bottom: 1px solid #e4e4e4; font: 7px/9px Lato, "Open Sans", sans-serif; color: #111; }
th { display: flex; align-items: center; justify-content: center; background: #efefef; border-color: #c8c8c8; font-weight: 700; }
tbody th { padding: 0 3px 0 0; border-bottom-color: #dcdcdc; border-right-color: #a0a0a0; }
thead tr { height: 11px; }
thead th { border-bottom-color: #a0a0a0; }
.cut { justify-content: flex-end; padding-right: 5px; }
.corner { justify-content: flex-end; align-items: flex-end; }
.corner i { border: 3px solid transparent; border-right-color: #aaa; border-bottom-color: #aaa; }
.merged { grid-column: span 10; text-align: center; }
.head { font-weight: 700; }
.num, .money, .flag { font-family: "Open Sans", "Noto Sans", sans-serif; }
.num { text-align: right; }
.money { padding-right: 3px; text-align: right; }
.flag { position: relative; }
.flag::before { content: ""; position: absolute; top: 0; left: 0; border: 2px solid transparent; border-top-color: #107c10; border-left-color: #107c10; }

.arrow { width: 0; height: 0; border: 3px solid transparent; }
.up { border-bottom: 5px solid #666; border-top: 0; }
.down { border-top: 5px solid #666; border-bottom: 0; }
.left { border-right: 4px solid #666; border-left: 0; }
.right { border-left: 4px solid #666; border-right: 0; }
.thumb { flex: 1; border-radius: 3px; background: #6b6b6b; }
.vscroll { display: flex; flex-direction: column; align-items: center; gap: 2px; width: 11px; padding: 2px 0 1px; }
.vscroll .thumb { width: 5px; }

.sheet-bar { display: flex; align-items: center; flex: none; height: 16px; border-bottom: 2px solid #dedede; }
.nav { width: 17px; padding-left: 4px; color: #888; }
.nav svg { margin: 0 auto; }
.nav:first-child { padding-left: 8px; }
.sheet-tab { width: 30px; height: 14px; margin-left: 21px; border-radius: 0 0 2px 2px; background: #fff; font: 700 7px/9px Lato, "Open Sans", sans-serif; }
.sheet-tab span { padding-bottom: 1px; border-bottom: 1px solid #107c41; }
.add { margin-left: 22px; }
.hscroll { display: flex; align-items: center; gap: 2px; flex: 1; margin: 0 11px 0 368px; }
.hscroll .left { margin-left: 4px; }
.hscroll .thumb { height: 5px; }
.hscroll .right { margin-left: 6px; }

.status { display: flex; align-items: center; flex: none; height: 11px; padding-right: 4px; background: #f4f4f4; }
.ready { margin: 0 9px 0 2px; }
.status > svg { margin-right: 1px; }
.view { display: flex; align-items: center; justify-content: center; width: 20px; height: 11px; }
.view.on { background: #dedede; }
.zoom-btn { width: 9px; font-size: 8px; }
.zoom { width: 52px; height: 9px; appearance: none; }
.zoom::-webkit-slider-runnable-track { height: 1px; background: #888; }
.zoom::-webkit-slider-thumb { appearance: none; width: 3px; height: 6px; margin-top: -3px; background: #444; }
.percent { margin-left: 4px; }
</style>
